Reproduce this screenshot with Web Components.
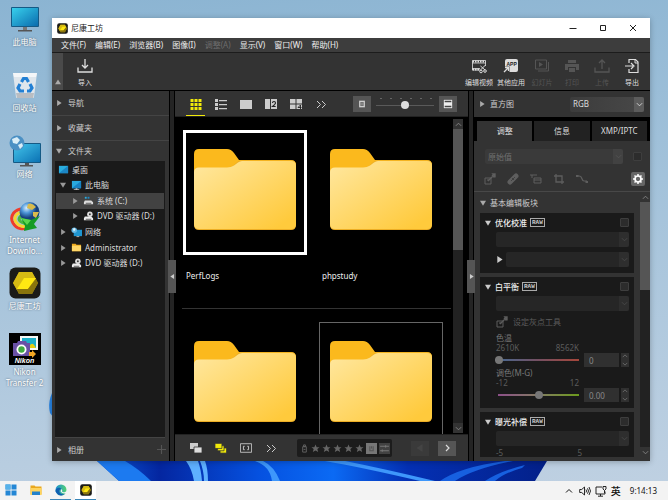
<!DOCTYPE html>
<html lang="zh-CN">
<head>
<meta charset="utf-8">
<title>尼康工坊</title>
<style>
html,body{margin:0;height:100%}
body{font:8px/12px "Noto Sans","Noto Sans CJK SC",sans-serif;color:#ddd;overflow:hidden}
</style>
</head>
<body>
<desktop-screen></desktop-screen>
<script>
const ICONS = {
  monitor: ['0 0 32 32', '<defs><linearGradient id="a" x2="1" y2="1"><stop stop-color="#38d0ec"/><stop offset="1" stop-color="#0a6cae"/></linearGradient></defs><rect x="2" y="4" width="28" height="20" rx="1" fill="#155a85"/><rect x="3" y="5" width="26" height="18" fill="url(#a)"/><path d="M14 24h4v3h-4z" fill="#777"/><path d="M9 27h14v1.500H9z" fill="#555"/>'],
  recycle: ['0 0 32 32', '<path d="M4 4h24l-3 24q0 1-1 1H8q-1 0-1-1z" fill="#dfe6ec"/><path d="M4 4h24l-1 4H5z" fill="#f4f6f8"/><path d="M7 24h18l-1 5H8z" fill="#b9bdc2"/><g fill="none" stroke="#2380d4" stroke-width="3.200"><path d="M12.500 13l2-3.500h3l2 3.500"/><path d="M21 15l2 4-2 3h-3"/><path d="M15 22h-4l-2-3 2-4"/></g>'],
  network: ['0 0 32 32', '<defs><linearGradient id="a" x2="1" y2="1"><stop stop-color="#43c4ea"/><stop offset="1" stop-color="#0b72b4"/></linearGradient></defs><rect x="4" y="8" width="28" height="20" rx="1" fill="#155a85"/><rect x="5" y="9" width="26" height="18" fill="url(#a)"/><path d="M16 28h4v2h-4zM11 30h13v1.500H11z" fill="#555"/><circle cx="8" cy="8" r="7.500" fill="#4b90c4"/><path d="M3 4l5-2 3 3-3 4-4-1zM9 10l4-2 1 3-3 3z" fill="#d9edf7"/>'],
  idm: ['0 0 32 32', '<defs><radialGradient id="a" cx=".35" cy=".3"><stop stop-color="#d9efff"/><stop offset=".5" stop-color="#4b95d8"/><stop offset="1" stop-color="#16407c"/></radialGradient></defs><g fill="none" stroke-width="3"><path d="M15 8C6 7 0 15 4 22s11 6 13 5" stroke="#ee3c2c"/><path d="M15 11C8 11 4 16 7 21s9 5 11 4" stroke="#f5d631"/><path d="M15 14c-4 0-6 4-4 6s6 3 8 2" stroke="#46b840"/></g><circle cx="20.500" cy="11" r="10" fill="url(#a)"/><path d="M19 3q4-2 8 3l-4 3-5-2zM24 11l6 0-3 6-3-2z" fill="#d9bb4c"/><path d="M12 17l10 2 9-4-6 8 3 4-13 3 1-5z" fill="#149b25"/><path d="M12 17l10 2-4 5z" fill="#5ad64d"/>'],
  nx: ['0 0 32 32', '<rect x=".500" y=".500" width="31" height="31" rx="6" fill="#1b1b18"/><path d="M10 5h13l6 11-6 11H10L4 16z" fill="#a58d0c"/><path d="M10 5h13l4 7H15L8 23 4 16z" fill="#d6bb14"/><path d="M15 11h12l-8 11H8z" fill="#ffe812"/><path d="M8 22h11l8-10 2 4-6 11H10z" fill="#8a750d"/>'],
  transfer: ['0 0 32 32', '<path d="M0 0h32v32H0z"/><rect x="11" y="3" width="18" height="14" fill="#f5f7f5"/><path d="M13 5h14v10H13z" fill="#1eafc8"/><path d="M15 15q2-9 5-1 3-7 7 1z" fill="#e5ce13"/><path d="M4 10h4l1-2h8l1 2h3v13H4z" fill="#6951a5"/><circle cx="12.500" cy="16.500" r="5" fill="#fff"/><circle cx="12.500" cy="16.500" r="3.200" fill="#41aa42"/><path d="M20 19h3v-2l4 4-4 4v-2h-3z" fill="#f4a723"/>'],
  pcSmall: ['0 0 12 12', '<path d="M1 1h10v8H1z" fill="#29a9de"/><path d="M11 1v8H1z" fill="#1782c4"/><path d="M5 9h2v1h2v1H3v-1h2z" fill="#bbb"/>'],
  desk: ['0 0 12 12', '<path d="M1 2h10v8H1z" fill="#2aaee0"/><path d="M11 2v8H1z" fill="#1c86c4"/>'],
  drive: ['0 0 12 12', '<path d="M2 2h2v2H2z" fill="#2aaee0"/><path d="M5 2h2v2H5z" fill="#1c86c4"/><path d="M2 6l7 0 2 2v2H1V8z" fill="#ddd"/><path d="M3 8.500h6v1H3z" fill="#555"/>'],
  disc: ['0 0 12 12', '<circle cx="7.500" cy="3.500" r="3" fill="#ddd"/><circle cx="7.500" cy="3.500" r="1" fill="#333"/><path d="M2 6l7 0 2 2v2H1V8z" fill="#eee"/><path d="M3 8.500h6v1H3z" fill="#555"/>'],
  netSmall: ['0 0 12 12', '<path d="M3 3h9v7H3z" fill="#1e95d0"/><path d="M6 10h3v1H6z" fill="#bbb"/><circle cx="3.500" cy="3.500" r="3" fill="#64b7e4"/><path d="M2 2l2-1 1 2-2 2z" fill="#e3f4fc"/>'],
  dirSmall: ['0 0 12 12', '<path d="M1 2h4l1 1h5v7H1z" fill="#eea91c"/><path d="M1 4h10v6H1z" fill="#ffd768"/>'],
  importIn: ['0 0 16 16', '<path d="M1 9.500V14h14V9.500M8 1v9M5 7l3 3 3-3" fill="none" stroke="currentColor" stroke-width="1.300"/>'],
  upload: ['0 0 16 16', '<path d="M1 9.500V14h14V9.500M8 11V2M5 5l3-3 3 3" fill="none" stroke="currentColor" stroke-width="1.300"/>'],
  film: ['0 0 16 16', '<path d="M1.500 2.500h13V8M1.500 2.500V12H9M1 5h14M1 10.500h8" fill="none" stroke="currentColor" stroke-width=".800"/><path d="M1.500 3.500h13M1.500 11.500H9" stroke="currentColor" stroke-width="2" stroke-dasharray="1.500 1"/><path d="M9.500 8l4.500 4M9.500 12l5-5" stroke="currentColor"/><circle cx="14" cy="13" r="1.300" fill="none" stroke="currentColor"/><circle cx="10" cy="13.500" r="1.300" fill="none" stroke="currentColor"/>'],
  app: ['0 0 16 16', '<rect x="2" y="1" width="13" height="13" rx="2" fill="#ddd"/><path d="M0 8.500h6.500V16H0z" fill="#333"/><path d="M1 14l4-4M2 9.500h3.500V13" stroke="#ddd" stroke-width="1.300" fill="none"/><text x="8.600" y="8" font-size="5" font-weight="700" text-anchor="middle" fill="#222" font-family="Liberation Sans">APP</text>'],
  slides: ['0 0 16 16', '<path d="M1.500 2h11v9h-11zM4 13h10.500V4" fill="none" stroke="currentColor"/><path d="M5 4l4 2.500L5 9z" fill="currentColor"/>'],
  printer: ['0 0 16 16', '<path d="M4 2h8v3H4zM1 6h14v6h-3V9H4v3H1zM5 10h6v4H5z" fill="currentColor"/>'],
  exportOut: ['0 0 16 16', '<path d="M5 5V1.500h6.500L14 4v10.500H5V11M1 8h8M7 5l3 3-3 3" fill="none" stroke="currentColor" stroke-width="1.200"/><path d="M11 1v4h3" fill="none" stroke="currentColor"/>'],
  grid: ['0 0 12 12', '<path d="M.500 1h3v3h-3zM4.500 1h3v3h-3zM8.500 1h3v3h-3zM.500 5h3v3h-3zM4.500 5h3v3h-3zM8.500 5h3v3h-3zM.500 9h3v3h-3zM4.500 9h3v3h-3zM8.500 9h3v3h-3z" fill="currentColor"/>'],
  list: ['0 0 12 12', '<path d="M0 1h3v3H0zM0 5h3v3H0zM0 9h3v3H0zM4 2h8v1.300H4zM4 6h8v1.300H4zM4 10h8v1.300H4z" fill="currentColor"/>'],
  single: ['0 0 12 12', '<path d="M0 2h12v9H0z" fill="currentColor"/>'],
  two: ['0 0 12 12', '<path d="M0 1h5v10H0zM6 1h6v10H6z" fill="currentColor"/><path d="M7.500 5q0-1.500 1.500-1.500t1.500 1.500q0 1-3 3.500h3.200" fill="none" stroke="#222" stroke-width="1.100"/>'],
  four: ['0 0 12 12', '<path d="M0 1h5.500v4.500H0zM6.500 1H12v4.500H6.500zM0 6.500h5.500V11H0zM6.500 6.500H12V11H6.500z" fill="currentColor"/><path d="M10.500 11V7L8 9.500h3.500" fill="none" stroke="#222" stroke-width=".900"/>'],
  more: ['0 0 12 12', '<path d="M2 3l3.500 3.500L2 10M7 3l3.500 3.500L7 10" fill="none" stroke="currentColor"/>'],
  frame: ['0 0 12 12', '<path d="M2.500 2h7v8h-7z" fill="#ccc"/><path d="M4 4h4v4H4z" fill="#444"/><path d="M4 5.500h4v1H4z" fill="#ddd"/>'],
  frameBig: ['0 0 12 12', '<path d="M1 1h10v10H1z" fill="#eee"/><path d="M2 2h8v2H2zM2 8h8v2H2z" fill="#444"/>'],
  stack: ['0 0 12 12', '<path d="M0 1h8v6H0z" fill="#ccc"/><path d="M4 5h8v6H4z" fill="#ddd" stroke="#333" stroke-width=".800"/>'],
  stackY: ['0 0 13 12', '<g fill="currentColor" stroke="#333" stroke-width=".800"><path d="M5.500 6h7v5.500h-7z"/><path d="M2.800 3.500h7V9h-7z"/><path d="M0 1h7.500v5.500H0z"/></g>'],
  brackets: ['0 0 14 12', '<path d="M.500 1h13v10H.500z" fill="none" stroke="currentColor"/><path d="M5.500 4H4v4h1.500M8.500 4H10v4H8.500" fill="none" stroke="currentColor" stroke-width="1.100"/>'],
  tag: ['0 0 8 10', '<path d="M2 3h4v6H2zM3 1h2v2H3z" fill="none" stroke="currentColor"/><path d="M3 6h2" stroke="currentColor"/>'],
  star: ['0 0 10 10', '<path d="M5 .500l1.300 3h3.200L7 5.600l1 3.400L5 7.100 2 9l1-3.400L.500 3.500h3.200z" fill="currentColor"/>'],
  label: ['0 0 10 10', '<path d="M0 0h10v10H0z" fill="#777"/><path d="M3.500 3v4h3V3M5 3v2" stroke="#555" fill="none"/>'],
  filter: ['0 0 10 10', '<path d="M0 0h10v10H0z" fill="#414141"/><path d="M1 3h8M1 7h8M6 2v2M3 6v2" stroke="#777"/>'],
  wand: ['0 0 12 12', '<path d="M1 5h6v6H1zM3 7h2" fill="none" stroke="currentColor"/><path d="M4 8l5-5M8 2l2.500 2.500M9 1h2v2z" stroke="currentColor" stroke-width="1.400"/>'],
  patch: ['0 0 12 12', '<path d="M3 9l6-6" stroke="currentColor" stroke-width="5" stroke-linecap="round"/><path d="M5 5l2 2M4 8l4-4" stroke="#333" stroke-width=".700"/>'],
  warp: ['0 0 12 12', '<path d="M0 2h7M2 2v3M4 5v5h7V5H4M4 7h7" fill="none" stroke="currentColor"/>'],
  crop: ['0 0 12 12', '<path d="M3 1v8h8M1 3h8v8" fill="none" stroke="currentColor" stroke-width="1.300"/>'],
  curve: ['0 0 12 12', '<path d="M1 3h2c4 0 2 5 5 5h3" fill="none" stroke="currentColor" stroke-width="1.200"/><path d="M0 2h2.500v2H0zM9.500 8H12v2H9.500z" fill="currentColor"/>'],
  gear: ['0 0 12 12', '<circle cx="6" cy="6" r="3" fill="none" stroke="currentColor" stroke-width="1.700"/><path d="M6 1v2M6 9v2M1 6h2M9 6h2M2.500 2.500l1.300 1.300M8.200 8.200l1.300 1.300M9.500 2.500L8.200 3.800M2.500 9.500l1.300-1.300" stroke="currentColor" stroke-width="1.500"/>'],
  right: ['0 0 8 8', '<path d="M1.500 0l6 4-6 4z" fill="currentColor"/>'],
  left: ['0 0 8 8', '<path d="M6.500 0l-6 4 6 4z" fill="currentColor"/>'],
  down: ['0 0 8 8', '<path d="M0 1h8L4 7.500z" fill="currentColor"/>'],
  up: ['0 0 8 8', '<path d="M0 7h8L4 .500z" fill="currentColor"/>'],
  chevDown: ['0 0 8 8', '<path d="M1 2.500l3 3 3-3" fill="none" stroke="currentColor"/>'],
  chevUp: ['0 0 8 8', '<path d="M1 5.500l3-3 3 3" fill="none" stroke="currentColor"/>'],
  chevRight: ['0 0 8 8', '<path d="M3 1l3 3-3 3" fill="none" stroke="currentColor" stroke-width="1.200"/>'],
  plus: ['0 0 8 8', '<path d="M4 0v8M0 4h8" stroke="currentColor"/>'],
  min: ['0 0 8 8', '<path d="M.500 4.500h7" stroke="currentColor"/>'],
  max: ['0 0 8 8', '<path d="M1.500 1.500h5v5h-5z" fill="none" stroke="currentColor"/>'],
  close: ['0 0 8 8', '<path d="M1 1l6 6M7 1L1 7" stroke="currentColor"/>'],
  start: ['0 0 12 12', '<path d="M.500.500h5v5h-5zM6.500.500h5v5h-5zM.500 6.500h5v5h-5zM6.500 6.500h5v5h-5z" fill="#2587d5"/><path d="M.500.500h5v5h-5z" fill="#56b2ea"/>'],
  explorer: ['0 0 12 12', '<path d="M.500 1.500h4l1 1h6v8H.500z" fill="#e9a81e"/><path d="M.500 4h11v7H.500z" fill="#ffd45e"/><path d="M2 7.500h8V11H2z" fill="#2382cc"/>'],
  edge: ['0 0 12 12', '<defs><linearGradient id="a" x2="1" y2="0"><stop stop-color="#1b8fd6"/><stop offset="1" stop-color="#55d271"/></linearGradient></defs><circle cx="6" cy="6" r="5.500" fill="url(#a)"/><path d="M.600 6.500C1 3.500 5 3 6.500 5 4 5 3.500 8 5.500 9.500s4.500.500 5-.500C9 11.500 5 12.500 2.500 10S.500 7 .600 6.500z" fill="#0f5fb0"/><path d="M6.500 5c1.500 1 0 2.500 1 3s4 .500 4-2q1 3-1 3.300-4 .500-5-2z" fill="#f3f3f3"/>'],
  speaker: ['0 0 12 12', '<path d="M.700 4.500h2L5.500 2v8L2.700 7.500h-2zM7 4.500q1 1.500 0 3M8.500 3.300q2 2.700 0 5.400M10 2q3 4 0 8" fill="none" stroke="currentColor" stroke-width=".900"/>'],
  ethernet: ['0 0 12 12', '<path d="M7 2H1v7h9V6.500M5.500 9v2M3 11.200h5M8 1.500h3V4L9.500 5.500 8 4zM9.500 5.500V8" fill="none" stroke="currentColor" stroke-width=".900"/>'],
  folder: ['0 0 102 81', '<defs><linearGradient id="f" x2="1" y2="1"><stop offset=".05" stop-color="#ffe69b"/><stop offset=".9" stop-color="#ffca3c"/></linearGradient></defs><path d="M0 5Q0 0 5 0h28q4 0 7 4l5 7h52q5 0 5 5v30H0z" fill="#fbb91d"/><path d="M0 24q0-5 5-5h28q4 0 7-3l3-3q2-1.500 4-1.500h50q5 0 5 5V76q0 5-5 5H5q-5 0-5-5z" fill="#edae25"/><path d="M0 23q0-4.500 5-4.500h28q4 0 7-2l4-3q2-1.500 4-1.500h49q5 0 5 5v58q0 5-5 5H5q-5 0-5-5z" fill="url(#f)"/>']
};

const RESET = `
:host{box-sizing:border-box}
*{box-sizing:border-box}
button{font:inherit;color:inherit;background:none;border:0;padding:0;margin:0;cursor:default}
`;
const define = (name, css, html, setup) => {
  const tpl = document.createElement('template');
  tpl.innerHTML = `<style>${RESET}${css}</style>${html}`;
  customElements.define(name, class extends HTMLElement {
    constructor() {
      super();
      this.attachShadow({ mode: 'open' }).append(tpl.content.cloneNode(true));
    }
    connectedCallback() { if (setup) setup(this, this.shadowRoot, s => this.shadowRoot.querySelector(s)); }
  });
};

define('ui-icon', `:host{display:block;flex:none;width:12px;height:12px}span{display:block;height:100%}svg{display:block;width:100%;height:100%}`, `<span></span>`, (el, root, $) => {
  const icon = ICONS[el.getAttribute('name')];
  if (icon) $('span').innerHTML = `<svg viewBox="${icon[0]}" aria-hidden="true">${icon[1]}</svg>`;
});

/* desktop */
define('desktop-icon', `
:host{display:block}
button{display:flex;flex-direction:column;align-items:center;gap:1px;width:100%;color:#fff;line-height:11px;text-shadow:0 0 2px #456}
ui-icon{width:32px;height:32px}
span{white-space:pre-line}
.art{position:relative}
i{position:absolute;left:0;right:0;bottom:1px;font:italic 900 7px/7px "Liberation Sans",sans-serif;text-shadow:none}
`, `<button><div class="art"></div><span><slot></slot></span></button>`, (el, root, $) => {
  $('.art').innerHTML = `<ui-icon name="${el.getAttribute('icon')}"></ui-icon>` + (el.hasAttribute('brand') ? `<i>${el.getAttribute('brand')}</i>` : '');
});

/* menu bar and toolbar */
define('menu-bar', `
:host{display:block;background:#3d3d3d;border-bottom:1px solid #1c1c1c}
nav{display:flex;height:14px;padding-left:9px;gap:9px;align-items:center;color:#eee;line-height:12px}
button{white-space:nowrap}
button:disabled{color:#6c6c6c}
`, `<nav><button>文件(F)</button><button>编辑(E)</button><button>浏览器(B)</button><button>图像(I)</button><button disabled>调整(A)</button><button>显示(V)</button><button>窗口(W)</button><button>帮助(H)</button></nav>`);

define('tool-button', `
:host{display:block;width:30px}
:host([wide]){width:32px}
button{display:flex;flex-direction:column;align-items:center;gap:4px;width:100%;font-size:7px;line-height:10px;color:#ddd;white-space:nowrap}
button:disabled{color:#555}
ui-icon{width:16px;height:16px}
`, `<button><div></div><slot></slot></button>`, (el, root, $) => {
  $('div').innerHTML = `<ui-icon name="${el.getAttribute('icon')}"></ui-icon>`;
  $('button').disabled = el.hasAttribute('disabled');
});

define('main-toolbar', `
:host{display:flex;height:38px;background:#333;border-bottom:1px solid #000;padding-right:3px}
.fold{width:11px;background:#4a4a4a;color:#aaa;display:flex;align-items:flex-end;justify-content:center;padding-bottom:5px}
.fold ui-icon{width:6px;height:6px}
tool-button{padding-top:5px}
.in{margin-left:7px}
.out{margin-left:auto;display:flex}
`, `<button class="fold" aria-label="折叠"><ui-icon name="up"></ui-icon></button>
<tool-button class="in" icon="importIn">导入</tool-button>
<div class="out"><tool-button wide icon="film">编辑视频</tool-button><tool-button wide icon="app">其他应用</tool-button><tool-button disabled icon="slides">幻灯片</tool-button><tool-button disabled icon="printer">打印</tool-button><tool-button disabled icon="upload">上传</tool-button><tool-button icon="exportOut">导出</tool-button></div>`);

/* left side */
define('side-heading', `
:host{display:block;height:25px;background:#333;border-bottom:1px solid #444}
button{display:flex;align-items:center;gap:6px;width:100%;height:100%;padding:0 3px 0 4px;color:#ccc;text-align:left}
.t{width:6px;height:6px;color:#aaa}
span{flex:1}
.p{width:9px;height:9px;color:#555}
`, `<button><span><slot></slot></span></button>`, (el, root, $) => {
  $('button').insertAdjacentHTML('afterbegin', `<ui-icon class="t" name="${el.hasAttribute('open') ? 'down' : 'right'}"></ui-icon>`);
  if (el.hasAttribute('add')) $('button').insertAdjacentHTML('beforeend', '<ui-icon class="p" name="plus"></ui-icon>');
});

define('tree-row', `
:host{display:block}
:host([selected]){background:#424242}
button{display:flex;align-items:center;gap:3px;width:100%;height:100%;padding-left:calc(4px + var(--level,0)*12px);color:#ddd;white-space:nowrap}
:host([root]) button{padding-left:2px}
.t{width:6px;height:6px;color:#999;margin-right:2px}
.i{width:11px;height:11px}
`, `<button><slot></slot></button>`, (el, root, $) => {
  el.style.setProperty('--level', el.getAttribute('level') || 0);
  const a = el.getAttribute('arrow');
  $('button').insertAdjacentHTML('afterbegin', (a ? `<ui-icon class="t" name="${a}"></ui-icon>` : '') + `<ui-icon class="i" name="${el.getAttribute('icon')}"></ui-icon>`);
});

define('folder-sidebar', `
:host{display:flex;flex-direction:column;background:#333;min-height:0}
side-heading[open]{height:20px;border:0}
side-heading[add]{height:23px;border:0}
.tree{flex:1;margin:0 4px 0 3px;padding:0 1px;background:#1a1a1a;border-bottom:1px solid #444}
.rows{display:grid;grid-template-rows:repeat(7,1fr);height:110px;padding-top:1px}
`, `<side-heading>导航</side-heading><side-heading>收藏夹</side-heading><side-heading open>文件夹</side-heading>
<div class="tree"><div class="rows">
<tree-row root icon="desk">桌面</tree-row>
<tree-row arrow="down" icon="pcSmall">此电脑</tree-row>
<tree-row level="1" arrow="right" icon="drive" selected>系统 (C:)</tree-row>
<tree-row level="1" arrow="right" icon="disc">DVD 驱动器 (D:)</tree-row>
<tree-row arrow="right" icon="netSmall">网络</tree-row>
<tree-row arrow="right" icon="dirSmall">Administrator</tree-row>
<tree-row arrow="right" icon="disc">DVD 驱动器 (D:)</tree-row>
</div></div>
<side-heading add>相册</side-heading>`);

define('pane-handle', `
:host{display:flex;align-items:center;justify-content:center;background:#242424;border-left:1px solid #000;border-right:1px solid #000;z-index:1}
button{flex:none;width:8px;height:33px;background:#555;color:#ccc;display:flex;align-items:center;justify-content:center}
ui-icon{width:5px;height:5px}
`, `<button aria-label="折叠面板"></button>`, (el, root, $) => {
  $('button').innerHTML = `<ui-icon name="${el.getAttribute('arrow')}"></ui-icon>`;
});

define('scroll-rail', `
:host{display:flex;flex-direction:column;width:10px;background:#222}
button{height:10px;background:#333;color:#888;display:flex;align-items:center;justify-content:center}
ui-icon{width:7px;height:7px}
.track{flex:1}.thumb{height:var(--thumb);background:#555}
`, `<button aria-label="向上"><ui-icon name="chevUp"></ui-icon></button><div class="track"><div class="thumb"></div></div><button aria-label="向下"><ui-icon name="chevDown"></ui-icon></button>`);

/* centre */
define('view-button', `
:host{display:block;width:25px;height:100%;color:#ccc}
:host([active]){color:#f2ea0a}
button{width:19px;height:100%;margin:0 auto;display:flex;align-items:center;justify-content:center;border-top:1px solid transparent;border-bottom:1px solid transparent}
:host([underline]) button{border-bottom-color:#f2ea0a}
ui-icon{width:12px;height:12px}
`, `<button></button>`, (el, root, $) => {
  $('button').setAttribute('aria-label', el.getAttribute('label'));
  $('button').innerHTML = `<ui-icon name="${el.getAttribute('icon')}"></ui-icon>`;
});

define('view-toolbar', `
:host{display:flex;align-items:center;height:26px;background:#333;padding:0 11px 0 8px;border-bottom:1px solid #222}
.zoom{margin-left:auto;display:flex;align-items:center;gap:5px}
.zoom button{width:18px;height:16px;background:#555;display:flex;align-items:center;justify-content:center}
.zoom ui-icon{width:10px;height:10px}
label{width:58px;height:16px;display:block;background:radial-gradient(circle,#666 1px,transparent 1px) 0 0/10px 5px repeat-x}
input{appearance:none;display:block;width:100%;height:16px;margin:0;background:linear-gradient(#5a5a5a,#5a5a5a) 0 9px/100% 1px no-repeat}
input::-webkit-slider-thumb{appearance:none;width:8px;height:8px;border-radius:50%;background:#ddd;margin-top:3px}
`, `<view-button active underline icon="grid" label="缩略图网格"></view-button><view-button icon="list" label="列表"></view-button><view-button icon="single" label="单张"></view-button><view-button icon="two" label="两张"></view-button><view-button icon="four" label="四张"></view-button><view-button icon="more" label="更多"></view-button>
<div class="zoom"><button aria-label="缩小"><ui-icon name="frame"></ui-icon></button><label><input type="range" aria-label="缩略图大小" value="50"></label><button aria-label="放大"><ui-icon name="frameBig"></ui-icon></button></div>`);

define('folder-card', `
:host{display:block;width:124px}
button{display:block;width:100%;text-align:left;color:#eee}
.box{display:grid;place-items:center;height:125px;border:1px solid transparent;padding-bottom:6px}
:host([selected]) .box{border:3px solid #fff}
:host([hover]) .box{border-color:#666}
ui-icon{width:102px;height:81px}
.name{display:block;margin:14px 0 0 3px;line-height:14px;min-height:14px}
`, `<button><div class="box"><ui-icon name="folder"></ui-icon></div><span class="name"><slot></slot></span></button>`);

define('folder-grid', `
:host{display:flex;background:#000;min-height:0;padding-right:5px}
.area{flex:1;overflow:hidden;padding:0 2px 0 7px}
.row{display:flex;gap:12px;padding:13px 1px 25px;border-bottom:1px solid #333}
scroll-rail{--thumb:41%;margin:2px 0 1px}
`, `<div class="area"><div class="row"><folder-card selected>PerfLogs</folder-card><folder-card>phpstudy</folder-card></div><div class="row"><folder-card></folder-card><folder-card hover></folder-card></div></div><scroll-rail></scroll-rail>`);

define('status-bar', `
:host{display:flex;align-items:center;height:27px;background:#333;padding:0 12px 0 8px;border-top:1px solid #222}
.rate{display:flex;align-items:center;gap:2px;height:18px;margin-left:14px;padding:0 2px 0 3px;background:#1c1c1c;border-radius:2px;color:#666}
.rate button{display:block}
.rate ui-icon{width:9px;height:9px}
.rate .sq ui-icon{width:11px;height:11px}
.nav{margin-left:auto;display:flex;gap:9px}
.nav button{width:18px;height:15px;background:#555;display:flex;align-items:center;justify-content:center}
.nav button:disabled{background:#3a3a3a;color:#444}
.nav ui-icon{width:8px;height:8px}
`, `<view-button icon="stack" label="堆叠"></view-button><view-button active icon="stackY" label="展开堆叠"></view-button><view-button icon="brackets" label="对焦点"></view-button><view-button icon="more" label="更多"></view-button>
<div class="rate"></div>
<div class="nav"><button disabled aria-label="上一个"><ui-icon name="left"></ui-icon></button><button aria-label="下一个"><ui-icon name="chevRight"></ui-icon></button></div>`, (el, root, $) => {
  const b = (n, l, c = '') => `<button class="${c}" aria-label="${l}"><ui-icon name="${n}"></ui-icon></button>`;
  $('.rate').innerHTML = b('tag', '保护') + [1,2,3,4,5].map(n => b('star', n + ' 星')).join('') + b('label', '标签', 'sq') + b('filter', '筛选', 'sq');
});

/* right side */
define('drop-down', `
:host{display:flex;height:15px;color:#ddd;background:linear-gradient(90deg,#3c3c3c,#484848);border-radius:2px;min-width:0}
:host([dim]){background:#262626;color:#606060}
:host([flat]){background:#3a3a3a;color:#707070}
select{appearance:none;flex:1;min-width:0;font:inherit;color:inherit;background:none;border:0;padding:0 3px;margin:0;opacity:1}
i{display:grid;place-items:center;width:10px;background:#5c5c5c;border-radius:0 2px 2px 0;pointer-events:none}
:host([dim]) i{background:#2e2e2e;color:#4a4a4a}
:host([flat]) i{background:#424242;color:#555}
ui-icon{width:7px;height:7px}
`, `<select><option></option></select><i><ui-icon name="chevDown"></ui-icon></i>`, (el, root, $) => {
  $('option').textContent = el.getAttribute('value') || '';
  $('select').setAttribute('aria-label', el.getAttribute('label'));
  $('select').disabled = el.hasAttribute('dim') || el.hasAttribute('flat');
});

define('tick-box', `
:host{display:block;flex:none;width:9px;height:9px}
input{appearance:none;display:block;width:100%;height:100%;margin:0;background:#2c2c2c;border:1px solid #3e3e3e;border-radius:1px}
`, `<input type="checkbox">`, (el, root, $) => $('input').setAttribute('aria-label', el.getAttribute('label') || '启用'));

define('adjust-box', `
:host{display:block;background:#1a1a1a;padding:0 5px 6px 16px}
header{display:flex;align-items:center;gap:3px;height:19px;margin-left:-11px;color:#eee;font-weight:500}
.t{width:6px;height:6px;margin-right:1px;color:#ccc}
b{border:1px solid #aaa;color:#ccc;font:700 6px/7px "Liberation Mono",monospace;padding:0 1px}
tick-box{margin-left:auto}
`, `<header><ui-icon class="t" name="down"></ui-icon><span></span><b>RAW</b><tick-box></tick-box></header><slot></slot>`, (el, root, $) => {
  $('span').textContent = el.getAttribute('heading');
});

define('value-slider', `
:host{display:block;color:#777;margin-top:1px}
label{display:block;line-height:10px}
.g{display:grid;grid-template-columns:1fr 35px 8px;column-gap:2px;align-items:end}
.l{padding-right:2px}
.ends{display:flex;justify-content:space-between;line-height:10px;color:#5c5c5c;padding-right:1px}
input[type=range]{appearance:none;display:block;width:81px;height:14px;margin:0 0 0 2px;background:var(--track) 0 6px/100% 2px no-repeat}
input[type=range]::-webkit-slider-thumb{appearance:none;width:8px;height:8px;border-radius:50%;background:#777}
:host([first]) input[type=range]{margin-left:-1px;width:84px}
input[type=text]{font:inherit;color:#888;background:#303030;border:0;width:100%;height:14px;padding:0 5px;margin:0}
.s{display:flex;flex-direction:column;justify-content:space-between;height:14px;background:#303030;color:#777;padding:0 1px}
.s button{display:block;height:6px}
.s ui-icon{width:6px;height:6px}
`, `<label for="r"></label><div class="g"><div class="l"><div class="ends"><span class="a"></span><span class="z"></span></div><input id="r" type="range"></div><input type="text"><div class="s"><button aria-label="增加"><ui-icon name="chevUp"></ui-icon></button><button aria-label="减少"><ui-icon name="chevDown"></ui-icon></button></div></div>`, (el, root, $) => {
  const a = n => el.getAttribute(n);
  $('label').textContent = a('label');
  $('.a').textContent = a('from');
  $('.z').textContent = a('to');
  $('#r').value = a('pos');
  $('input[type=text]').value = a('value');
  $('input[type=text]').setAttribute('aria-label', a('label'));
});

define('adjust-panel', `
:host{display:flex;flex-direction:column;background:#333;min-height:0;min-width:0;overflow:hidden}
.hist{display:flex;align-items:center;height:26px;padding:0 6px 0 5px;color:#ccc}
.hist button{display:flex;align-items:center;gap:5px;flex:1}
.hist ui-icon,.group ui-icon{width:6px;height:6px;color:#aaa}
.hist drop-down{width:74px}
.tabs{display:grid;grid-template-columns:repeat(3,1fr);gap:2px;background:#000;padding:4px 3px 0}
.tabs button{height:20px;background:#222;color:#ddd}
.tabs button[aria-selected=true]{background:#333}
.preset{display:flex;align-items:center;gap:10px;padding:8px 8px 0 11px}
.preset drop-down{flex:1}
.tools{display:flex;align-items:center;gap:11px;height:28px;padding:3px 5px 0 10px;color:#5e5e5e;border-bottom:1px solid #484848}
.gear{margin-left:auto;width:14px;height:14px;background:#666;color:#fff;border-radius:2px;display:grid;place-items:center}
.body{flex:1;min-height:0;display:flex;margin-bottom:4px}
.stack{flex:1;overflow:hidden;padding:0 6px;min-width:0}
.group{display:flex;align-items:center;gap:4px;height:21px;color:#ccc}
adjust-box{margin-bottom:4px}
.sub{display:flex;align-items:center;gap:3px;margin-top:5px}
.sub ui-icon{width:7px;height:7px;color:#ccc}
.sub drop-down{flex:1}
.grey{display:flex;align-items:center;gap:5px;color:#5c5c5c;height:21px}
.ends{display:flex;justify-content:space-between;width:86px;color:#5c5c5c;line-height:14px}
scroll-rail{--thumb:36%}
`, `
<div class="hist"><button><ui-icon name="right"></ui-icon>直方图</button><drop-down value="RGB" label="直方图通道"></drop-down></div>
<div class="tabs" role="tablist"><button role="tab" aria-selected="true">调整</button><button role="tab">信息</button><button role="tab">XMP/IPTC</button></div>
<div class="preset"><drop-down flat value="原始值" label="预设"></drop-down><tick-box label="应用预设"></tick-box></div>
<div class="tools"><ui-icon name="wand"></ui-icon><ui-icon name="patch"></ui-icon><ui-icon name="warp"></ui-icon><ui-icon name="crop"></ui-icon><ui-icon name="curve"></ui-icon><button class="gear" aria-label="设置"><ui-icon name="gear"></ui-icon></button></div>
<div class="body"><div class="stack">
<button class="group"><ui-icon name="down"></ui-icon>基本编辑板块</button>
<adjust-box heading="优化校准"><drop-down dim label="优化校准"></drop-down><div class="sub"><ui-icon name="right"></ui-icon><drop-down dim label="级别"></drop-down></div></adjust-box>
<adjust-box heading="白平衡"><drop-down dim label="白平衡"></drop-down><button class="grey"><ui-icon name="wand"></ui-icon>设定灰点工具</button>
<value-slider first label="色温" from="2610K" to="8562K" pos="0" value="0" style="--track:linear-gradient(90deg,#456a92,#735063 50%,#a5463a)"></value-slider>
<value-slider label="调色(M-G)" from="-12" to="12" pos="50" value="0.00" style="--track:linear-gradient(90deg,#8c4f88,#837c62 50%,#6c9a1c)"></value-slider></adjust-box>
<adjust-box heading="曝光补偿"><drop-down dim label="曝光补偿"></drop-down><div class="ends"><span>-5</span><span>5</span></div></adjust-box>
</div><scroll-rail></scroll-rail></div>`);

/* window */
define('app-window', `
:host{display:grid;grid-template-rows:20px auto auto minmax(0,1fr);box-shadow:0 1px 6px #0004;min-height:0;min-width:0;background:#333}
header{display:flex;align-items:center;background:#fff;color:#222;padding:0 4px 0 5px;gap:3px}
.logo{width:11px;height:11px}
h1{font:inherit;margin:0;flex:1}
.ctl{display:flex;gap:4px}
.ctl button{width:26px;height:20px;display:grid;place-items:center}
.ctl ui-icon{width:8px;height:8px}
.main{display:grid;grid-template-columns:117px 6px minmax(0,1fr) 6px 176px;min-height:0}
.centre{display:grid;grid-template-rows:26px minmax(0,1fr) 27px;min-height:0;min-width:0}
`, `<header><ui-icon class="logo" name="nx"></ui-icon><h1>尼康工坊</h1><div class="ctl"><button aria-label="最小化"><ui-icon name="min"></ui-icon></button><button aria-label="最大化"><ui-icon name="max"></ui-icon></button><button aria-label="关闭"><ui-icon name="close"></ui-icon></button></div></header>
<menu-bar></menu-bar><main-toolbar></main-toolbar>
<div class="main"><folder-sidebar></folder-sidebar><pane-handle arrow="left"></pane-handle><div class="centre"><view-toolbar></view-toolbar><folder-grid></folder-grid><status-bar></status-bar></div><pane-handle arrow="right"></pane-handle><adjust-panel></adjust-panel></div>`);

define('task-bar', `
:host{display:flex;align-items:center;height:19px;background:#f3f3f3;color:#111;padding:0 11px 0 0}
.apps{display:flex;height:100%;gap:4px}
.apps button{width:21px;display:grid;place-items:center;border-bottom:1px solid transparent}
.apps .on{background:#fff;border-bottom-color:#3a86b8}
.apps .run{border-bottom-color:#3a86b8}
.tray{margin-left:auto;display:flex;align-items:center;gap:4px}
.tray .c{width:8px;height:8px;margin-right:2px}
b{font-size:10px;font-weight:500}
time{margin-left:5px}
`, `<div class="apps"><button aria-label="开始"><ui-icon name="start"></ui-icon></button><button aria-label="文件资源管理器"><ui-icon name="explorer"></ui-icon></button><button class="run" aria-label="浏览器"><ui-icon name="edge"></ui-icon></button><button class="on" aria-label="尼康工坊"><ui-icon name="nx"></ui-icon></button></div>
<div class="tray"><ui-icon class="c" name="chevUp"></ui-icon><ui-icon name="speaker"></ui-icon><ui-icon name="ethernet"></ui-icon><b>英</b><time>9:14:13</time></div>`);

define('desktop-screen', `
:host{display:grid;grid-template-rows:minmax(0,1fr) auto;height:100vh;position:relative;background:linear-gradient(175deg,#8bb4d2 0%,#9fc0d9 35%,#b4cbdf 75%,#c0d1e2 100%)}
.bloom{position:absolute;left:0;bottom:19px;width:100%;height:100px}
.desk{position:relative;display:grid;grid-template-columns:52px minmax(0,1fr);padding:18px 18px 20px 0;min-height:0}
.icons{display:grid;grid-auto-rows:66px;align-content:start;margin-top:-15px;padding-right:3px}
.bar{position:relative}
`, `<svg class="bloom" viewBox="0 0 668 100" preserveAspectRatio="none" aria-hidden="true">
<defs><linearGradient id="b"><stop stop-color="#0a62d8"/><stop offset=".1" stop-color="#0a4fd0"/><stop offset=".2" stop-color="#0426a0"/><stop offset=".4" stop-color="#0551e0"/><stop offset=".55" stop-color="#0b6af4"/><stop offset=".7" stop-color="#0430b4"/><stop offset="1" stop-color="#031f86"/></linearGradient></defs>
<path d="M60 0Q46 16 50 32L60 45z" fill="#2784e4"/>
<path d="M60 40l37 40 22 20H535l12-20 10-40z" fill="url(#b)"/>
<path d="M97 80l22 20h32q-12-12-26-20z" fill="#1c7af0"/><path d="M186 80q6 8 8 20h8q-1-12-4-20zM200 80q4 10 4 20h4q0-12-3-20z" fill="#5eb0ff"/>
<path d="M255 80q15 5 17 20h8q-6-15-17-20zM345 80q40 8 90 20h-15q-60-14-95-20z" fill="#3e97fb"/>
<path d="M440 100q20-14 65-20h8q-40 8-58 20zM485 100q15-10 40-16l-3 3q-18 5-27 13z" fill="#1760e0"/></svg>
<div class="desk"><div class="icons">
<desktop-icon icon="monitor">此电脑</desktop-icon><desktop-icon icon="recycle">回收站</desktop-icon><desktop-icon icon="network">网络</desktop-icon><desktop-icon icon="idm">Internet
Downlo...</desktop-icon><desktop-icon icon="nx">尼康工坊</desktop-icon><desktop-icon icon="transfer" brand="Nikon">Nikon
Transfer 2</desktop-icon></div>
<app-window></app-window></div>
<task-bar class="bar"></task-bar>`);
</script>
</body>
</html>
